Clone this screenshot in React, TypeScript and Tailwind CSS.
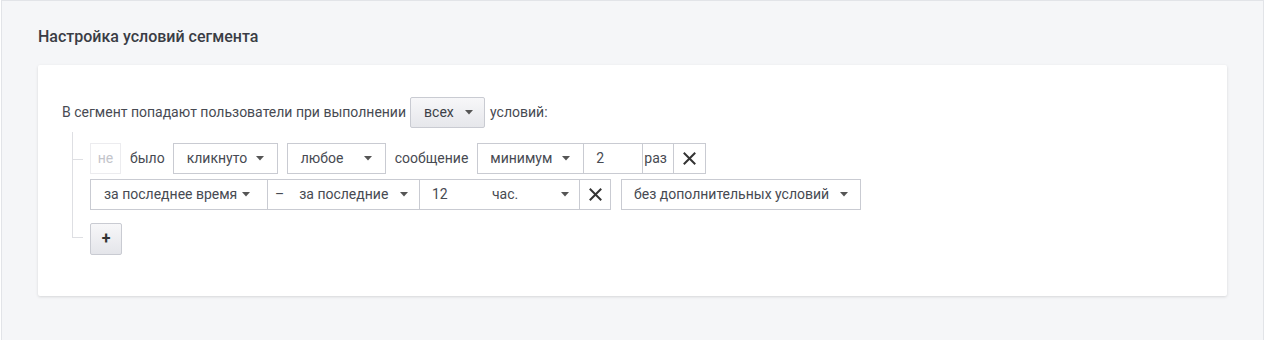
import React from "react";

const Caret = () => (
  <svg width="8" height="5" viewBox="0 0 8 5" className="shrink-0">
    <path d="M0 0 L8 0 L4 4.5 Z" fill="#555" />
  </svg>
);

const XIcon = () => (
  <svg width="13" height="13" viewBox="0 0 13 13">
    <path d="M1.5 1.5 L11.5 11.5 M11.5 1.5 L1.5 11.5" stroke="#333" strokeWidth="2" strokeLinecap="square" />
  </svg>
);

export default function App() {
  const font = { fontFamily: "Roboto, 'Liberation Sans', sans-serif" };
  return (
    <div className="bg-white w-[1265px] h-[340px]" style={font}>
      <div className="ml-px w-[1263px] h-[340px] border-t border-l border-r border-[#e2e4e8] bg-[#f5f6f8] px-[36px] pt-[26px] box-border">
        <h2 className="text-[16px] leading-[20px] font-medium text-[#3a3d45]">Настройка условий сегмента</h2>
        <div className="mt-[18px] w-[1189px] h-[231px] bg-white rounded-[2px] shadow-[0_1px_3px_rgba(0,0,0,0.13)] pl-[24px] pt-[32px] text-[14px] text-[#474a52]">
          <div className="flex items-center h-[31px]">
            <span>В сегмент попадают пользователи при выполнении</span>
            <div className="ml-[4px] w-[75px] h-[31px] border border-[#c9cbd2] rounded-[2px] bg-gradient-to-b from-[#f7f7f9] to-[#e6e7eb] flex items-center pl-[13px] pr-[11px] justify-between text-[#3c3f47]">
              <span>всех</span>
              <Caret />
            </div>
            <span className="ml-[5px]">условий:</span>
          </div>
          <div className="relative ml-[10px] mt-[4px] pl-[18px] pt-[11px]">
            <div className="absolute left-0 top-0 w-px h-[106px] bg-[#dedfe3]" />
            <div className="absolute left-0 top-[27px] w-[11px] h-px bg-[#dedfe3]" />
            <div className="absolute left-0 top-[105px] w-[11px] h-px bg-[#dedfe3]" />
            <div className="flex items-center h-[31px]">
              <div className="w-[31px] h-[31px] border border-[#ececef] flex items-center justify-center text-[#c3c5cb]">не</div>
              <span className="ml-[9px]">было</span>
              <div className="ml-[8px] w-[105px] h-[31px] border border-[#c9cbd2] flex items-center justify-between pl-[13px] pr-[13px]">
                <span>кликнуто</span>
                <Caret />
              </div>
              <div className="ml-[9px] w-[99px] h-[31px] border border-[#c9cbd2] flex items-center justify-between pl-[13px] pr-[13px]">
                <span>любое</span>
                <Caret />
              </div>
              <span className="ml-[9px]">сообщение</span>
              <div className="ml-[9px] flex h-[31px]">
                <div className="w-[107px] h-[31px] border border-[#c9cbd2] flex items-center justify-between pl-[12px] pr-[13px]">
                  <span>минимум</span>
                  <Caret />
                </div>
                <div className="w-[59px] h-[31px] border-y border-r border-[#c9cbd2] flex items-center pl-[12px]">2</div>
                <div className="w-[31px] h-[31px] border-y border-r border-[#c9cbd2] flex items-center pl-[1px]">раз</div>
                <div className="w-[32px] h-[31px] border-y border-r border-[#c9cbd2] flex items-center justify-center">
                  <XIcon />
                </div>
              </div>
            </div>
            <div className="flex items-center h-[31px] mt-[5px]">
              <div className="flex h-[31px]">
                <div className="w-[178px] h-[31px] border border-[#c9cbd2] flex items-center justify-between pl-[13px] pr-[17px]">
                  <span>за последнее время</span>
                  <Caret />
                </div>
                <div className="w-[152px] h-[31px] border-y border-r border-[#c9cbd2] flex items-center pl-[7px] pr-[11px]">
                  <span>–</span>
                  <span className="ml-[15px]">за последние</span>
                  <span className="ml-auto"><Caret /></span>
                </div>
                <div className="w-[160px] h-[31px] border-y border-r border-[#c9cbd2] flex items-center pl-[12px] pr-[10px]">
                  <span className="w-[60px]">12</span>
                  <span>час.</span>
                  <span className="ml-auto"><Caret /></span>
                </div>
                <div className="w-[31px] h-[31px] border-y border-r border-[#c9cbd2] flex items-center justify-center">
                  <XIcon />
                </div>
              </div>
              <div className="ml-[10px] w-[240px] h-[31px] border border-[#c9cbd2] flex items-center justify-between pl-[12px] pr-[12px]">
                <span>без дополнительных условий</span>
                <Caret />
              </div>
            </div>
            <div className="mt-[13px] w-[32px] h-[32px] border border-[#c9cbd2] rounded-[2px] bg-gradient-to-b from-[#f7f7f9] to-[#e4e5ea] flex items-center justify-center text-[#333] font-bold text-[16px] leading-none">
              +
            </div>
          </div>
        </div>
      </div>
    </div>
  );
}
